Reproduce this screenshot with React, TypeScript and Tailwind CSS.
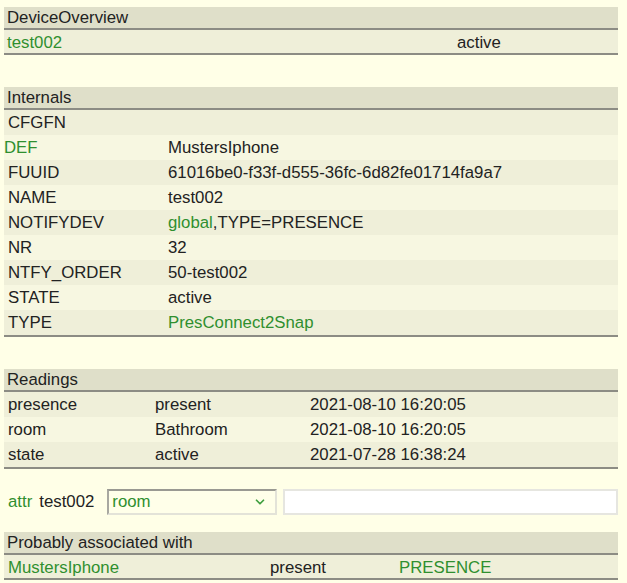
import { ChevronDown } from "lucide-react";

const internals: { name: string; value: React.ReactNode; nameLink?: boolean; valueLink?: boolean }[] = [
  { name: "CFGFN", value: "" },
  { name: "DEF", value: "MustersIphone", nameLink: true },
  { name: "FUUID", value: "61016be0-f33f-d555-36fc-6d82fe01714fa9a7" },
  { name: "NAME", value: "test002" },
  {
    name: "NOTIFYDEV",
    value: (
      <>
        <span className="text-[#2f8f2f]">global</span>,TYPE=PRESENCE
      </>
    ),
  },
  { name: "NR", value: "32" },
  { name: "NTFY_ORDER", value: "50-test002" },
  { name: "STATE", value: "active" },
  { name: "TYPE", value: "PresConnect2Snap", valueLink: true },
];

const readings = [
  { name: "presence", value: "present", time: "2021-08-10 16:20:05" },
  { name: "room", value: "Bathroom", time: "2021-08-10 16:20:05" },
  { name: "state", value: "active", time: "2021-07-28 16:38:24" },
];

function Header({ title }: { title: string }) {
  return (
    <div className="h-[23px] bg-[#dfdfc9] border-b-2 border-[#8c8c84] flex items-center pl-[3px]">
      {title}
    </div>
  );
}

export default function App() {
  return (
    <div
      className="min-h-screen bg-[#ffffe7] text-[#222222] text-[16.8px] px-[4px] pt-[7px] pb-4"
      style={{ fontFamily: '"Liberation Sans", Arial, sans-serif' }}
    >
      <div className="w-[614px]">
        {/* DeviceOverview */}
        <Header title="DeviceOverview" />
        <div className="h-[25px] bg-[#efefd9] border-b-2 border-[#8c8c84] grid grid-cols-[450px_1fr] items-center">
          <span className="pl-[3px] text-[#2f8f2f]">test002</span>
          <span className="pl-[3px]">active</span>
        </div>

        {/* Internals */}
        <div className="mt-[32px]">
          <Header title="Internals" />
          {internals.map((row, i) => (
            <div
              key={row.name}
              className={`h-[25px] grid grid-cols-[160px_1fr] items-center ${
                i % 2 === 0 ? "bg-[#efefd9]" : "bg-[#f7f7e1]"
              }`}
            >
              <span className={row.nameLink ? "text-[#2f8f2f]" : "pl-[4px]"}>{row.name}</span>
              <span className={`pl-[4px] ${row.valueLink ? "text-[#2f8f2f]" : ""}`}>{row.value}</span>
            </div>
          ))}
          <div className="border-b-2 border-[#8c8c84]" />
        </div>

        {/* Readings */}
        <div className="mt-[32px]">
          <Header title="Readings" />
          {readings.map((r, i) => (
            <div
              key={r.name}
              className={`h-[25px] grid grid-cols-[147px_155px_1fr] items-center ${
                i % 2 === 0 ? "bg-[#efefd9]" : "bg-[#f7f7e1]"
              }`}
            >
              <span className="pl-[4px]">{r.name}</span>
              <span className="pl-[4px]">{r.value}</span>
              <span className="pl-[4px]">{r.time}</span>
            </div>
          ))}
          <div className="border-b-2 border-[#8c8c84]" />
        </div>

        {/* attr */}
        <div className="mt-[20px] h-[26px] flex items-center">
          <span className="pl-[4px] text-[#2f8f2f]">attr</span>
          <span className="ml-[7px]">test002</span>
          <div className="ml-[13px] w-[170px] h-[26px] border-2 border-t-[#9a9a92] border-l-[#a8a8a0] border-r-[#e3e3d8] border-b-[#e3e3d8] bg-[#ffffe9] flex items-center justify-between pl-[3px] pr-[8px]">
            <span className="text-[#2f8f2f]">room</span>
            <ChevronDown size={14} strokeWidth={3} className="text-[#3f9f3f]" />
          </div>
          <div className="ml-[6px] flex-1 h-[26px] bg-white border-2 border-[#e6e6e0]" />
        </div>

        {/* Probably associated with */}
        <div className="mt-[17px]">
          <Header title="Probably associated with" />
          <div className="h-[25px] bg-[#efefd9] border-b-2 border-[#8c8c84] grid grid-cols-[262px_129px_1fr] items-center">
            <span className="pl-[4px] text-[#2f8f2f]">MustersIphone</span>
            <span className="pl-[4px]">present</span>
            <span className="pl-[4px] text-[#2f8f2f]">PRESENCE</span>
          </div>
        </div>
      </div>
    </div>
  );
}
